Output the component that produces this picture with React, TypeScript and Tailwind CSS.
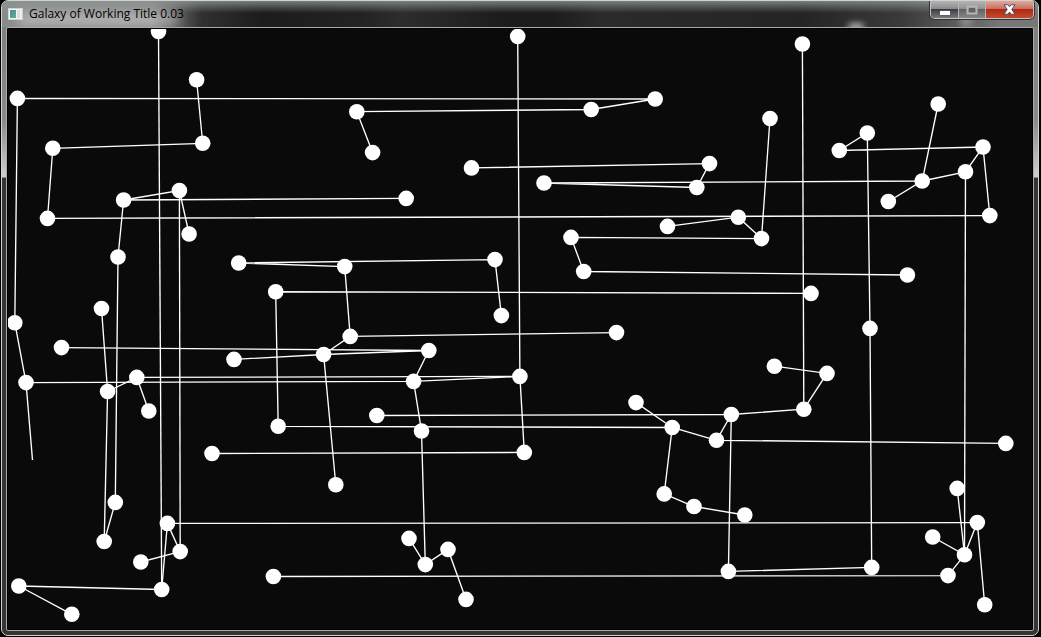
type Point = [number, number];

const stars: Record<string, Point> = {
  a: [158.5, 31.5], b: [196.6, 79.7], c: [202.7, 143.3], d: [17.4, 98.4], e: [52.8, 148.3],
  f: [47.5, 218.4], g: [123.6, 200], h: [179.4, 190.5], i: [189.1, 234], j: [517.7, 36.4],
  k: [655.2, 99], l: [591.2, 109.5], m: [356.8, 111.7], n: [372.6, 152.6], o: [471.5, 167.9],
  p: [544, 183], q: [406.2, 198.4], r: [696.8, 187.5], s: [667.5, 226.4], t: [571, 237.4],
  u: [802.4, 44], v: [770, 118.5], w: [709.5, 163.6], x: [867.3, 133], y: [839.3, 150.5],
  z: [938.2, 104], A: [983, 147], B: [965.5, 171.8], C: [922.2, 181], D: [888.3, 201.5],
  E: [989.8, 215.6], F: [738.3, 217.2], G: [761.5, 238.6], H: [118, 257], I: [14.8, 322.7],
  J: [101.5, 308.5], K: [61.5, 347.6], L: [26, 382.6], M: [107.6, 391.5], N: [136.8, 377.4],
  O: [148.8, 411], P: [238.7, 263], Q: [344.7, 266.6], R: [275.7, 291.7], S: [350.2, 336.4],
  T: [323.6, 354.5], U: [234, 359.4], V: [278.2, 426.3], W: [495, 259.6], X: [501.4, 315.6],
  Y: [616.5, 332.6], Z: [428.8, 350.5], AA: [413.6, 381.4], AB: [519.9, 376.4], AC: [376.8, 415.5],
  AD: [421.5, 431], AE: [583.7, 271.5], AF: [636, 402.6], AG: [672.2, 427.5], AH: [907.4, 275],
  AI: [811, 293.4], AJ: [870, 328.4], AK: [774.4, 366.2], AL: [827, 373.4], AM: [803.8, 409.2],
  AN: [731.3, 414.5], AO: [716.5, 440.3], AP: [1005.8, 443.4], AQ: [212, 453.5], AR: [335.8, 484.7],
  AS: [115.3, 502.4], AT: [104.2, 541.5], AU: [167.4, 523.4], AV: [180.2, 551.6], AW: [140.8, 562],
  AX: [161.7, 589.5], AY: [18.8, 586], AZ: [71.8, 614.3], BA: [273.4, 576.5], BB: [524.3, 452.4],
  BC: [409, 538.4], BD: [425.3, 564.6], BE: [448, 549.4], BF: [466, 599.4], BG: [664.2, 493.9],
  BH: [694, 506.5], BI: [744.8, 515], BJ: [728.4, 571.4], BK: [871.7, 567.4], BL: [957.2, 488.4],
  BM: [977.3, 522.6], BN: [932.7, 537], BO: [964.5, 554.8], BP: [948, 575.6], BQ: [984.7, 604.7],
};

// Each entry is a chain of stars joined one after another.
const lanes = [
  "a AX", "b c e f E", "n m l k d I L AA AB", "q g h i", "g H AS AT M J", "h AV", "M N O", "N AB",
  "K Z AA AD BD", "Z T U", "AR T S Q P W X", "S Y", "AI R V AG", "AC AN AM AL AK", "BJ AN AO AP",
  "AO AG AF", "AG BG BH BI", "BJ BK AJ x y A B C D", "A E", "B BO", "z C p r w o", "s F G v",
  "G t AE AH", "u AM", "j AB BB AQ", "AX AU AV AW", "AU BM", "AX AY AZ", "BC BD BE BF",
  "BQ BM BO BN", "BL BO BP BA",
];

function GalaxyMap() {
  return (
    <svg
      viewBox="8 29 1024 600"
      className="block min-h-0 w-full flex-1 bg-[#0a0a0a]"
      role="img"
      aria-label="Star map"
    >
      <g fill="none" stroke="#fff" strokeWidth="1.35">
        {lanes.map((lane) => (
          <polyline key={lane} points={lane.split(" ").map((id) => stars[id].join(",")).join(" ")} />
        ))}
        <line x1="26" y1="382.6" x2="32.5" y2="460" />
      </g>
      <g fill="#fff">
        {Object.entries(stars).map(([id, [cx, cy]]) => (
          <circle key={id} cx={cx} cy={cy} r="7.8" />
        ))}
      </g>
    </svg>
  );
}

function AppIcon() {
  return (
    <svg width="16" height="14" viewBox="0 0 16 14" className="shrink-0" aria-hidden="true">
      <defs>
        <linearGradient id="pane" x1="0" y1="0" x2="1" y2="1">
          <stop offset="0" stopColor="#4a86b4" />
          <stop offset="1" stopColor="#5fb377" />
        </linearGradient>
      </defs>
      <rect x="0.5" y="1.5" width="14" height="11" fill="#f4f4f4" stroke="#c9d3da" />
      <rect x="2" y="3" width="6" height="8" fill="url(#pane)" />
      <rect x="9" y="3" width="3" height="8" fill="#dcdedd" />
      <rect x="13" y="3" width="1" height="8" fill="#e6e6e6" />
    </svg>
  );
}

function TitleBar() {
  return (
    <header className="relative flex h-[26px] shrink-0 items-start justify-between overflow-hidden bg-[linear-gradient(90deg,#8a8a8a_0,#8a8a8a_150px,#303030_200px,#1c1c1c_260px,#232323_360px,#2d2d2d_400px,#1c1c1c_500px,#1c1c1c_550px,#2b2b2b_600px,#242424_800px,#3a3a3a_900px,#777_1000px)]">
      <div className="absolute inset-x-0 top-0 h-3 bg-gradient-to-b from-[#8c9491]/80 to-transparent" />
      <div className="absolute top-3 left-4 h-3 w-40 bg-white/40 blur-[6px]" />
      <div className="absolute right-[174px] -bottom-1 h-2 w-4 rounded-full bg-white/60 blur-[3px]" />
      <div className="absolute right-[66px] bottom-0 h-3 w-3 bg-white/25 blur-[3px]" />
      <div className="relative flex items-center gap-[5px] pt-[5px] pl-1.5">
        <AppIcon />
        <h1 className="font-['Open_Sans','Noto_Sans',sans-serif] text-[12px] leading-4 text-black">
          Galaxy of Working Title 0.03
        </h1>
      </div>
      <div className="relative mr-1 flex h-[18px] overflow-hidden rounded-b-[5px] border border-t-0 border-[#c4c4c4] shadow-[0_0_0_1px_#333]">
        <button
          type="button"
          aria-label="Minimize"
          className="flex w-7 items-center justify-center border-r border-[#b4b4b4] bg-[linear-gradient(#b4b4b4_0,#8c8c8c_45%,#3b3d40_50%,#77797c_100%)]"
        >
          <svg width="12" height="6" viewBox="0 0 12 6" className="mt-1.5" aria-hidden="true">
            <rect x="0.5" y="0.5" width="11" height="5" rx="1" fill="#5a5f6a" />
            <rect x="1" y="1" width="10" height="4" fill="#fff" />
          </svg>
        </button>
        <button
          type="button"
          aria-label="Maximize"
          disabled
          className="flex w-[27px] items-center justify-center border-r border-[#b4b4b4] bg-[linear-gradient(#b4b4b4_0,#929292_45%,#616264_50%,#858688_100%)]"
        >
          <svg width="12" height="10" viewBox="0 0 12 10" aria-hidden="true">
            <rect x="1.5" y="1.5" width="9" height="7" fill="none" stroke="#b5b5b5" strokeWidth="2" />
            <rect x="3.5" y="3.5" width="5" height="3" fill="none" stroke="#606060" />
          </svg>
        </button>
        <button
          type="button"
          aria-label="Close"
          className="flex w-[47px] items-center justify-center bg-[linear-gradient(#dfa99c_0,#c8705f_45%,#b02a12_50%,#c44a2c_100%)]"
        >
          <svg width="13" height="11" viewBox="0 0 13 11" aria-hidden="true">
            <path
              d="M1 .8h3.8l1.7 2 1.7-2H12L8.8 5.4l3.2 4.8H8.2L6.5 8.1l-1.7 2.1H1l3.2-4.8z"
              fill="#fff"
              stroke="#4c4f63"
            />
          </svg>
        </button>
      </div>
    </header>
  );
}

export default function App() {
  return (
    <main className="flex h-screen bg-black pr-0.5 pb-px pl-px">
      <section className="flex min-w-0 flex-1 flex-col overflow-hidden rounded-[7px] border border-[#cfd3d2] bg-[linear-gradient(#7c7c7c_0,#8a8a8a_120px,#d0d0d0_176px,#353535_177px,#353535_100%)]">
        <TitleBar />
        <div className="mx-1 mb-1 flex min-h-0 flex-1 flex-col rounded-[2px] border border-[#aaa] bg-black p-px">
          <GalaxyMap />
        </div>
      </section>
    </main>
  );
}
